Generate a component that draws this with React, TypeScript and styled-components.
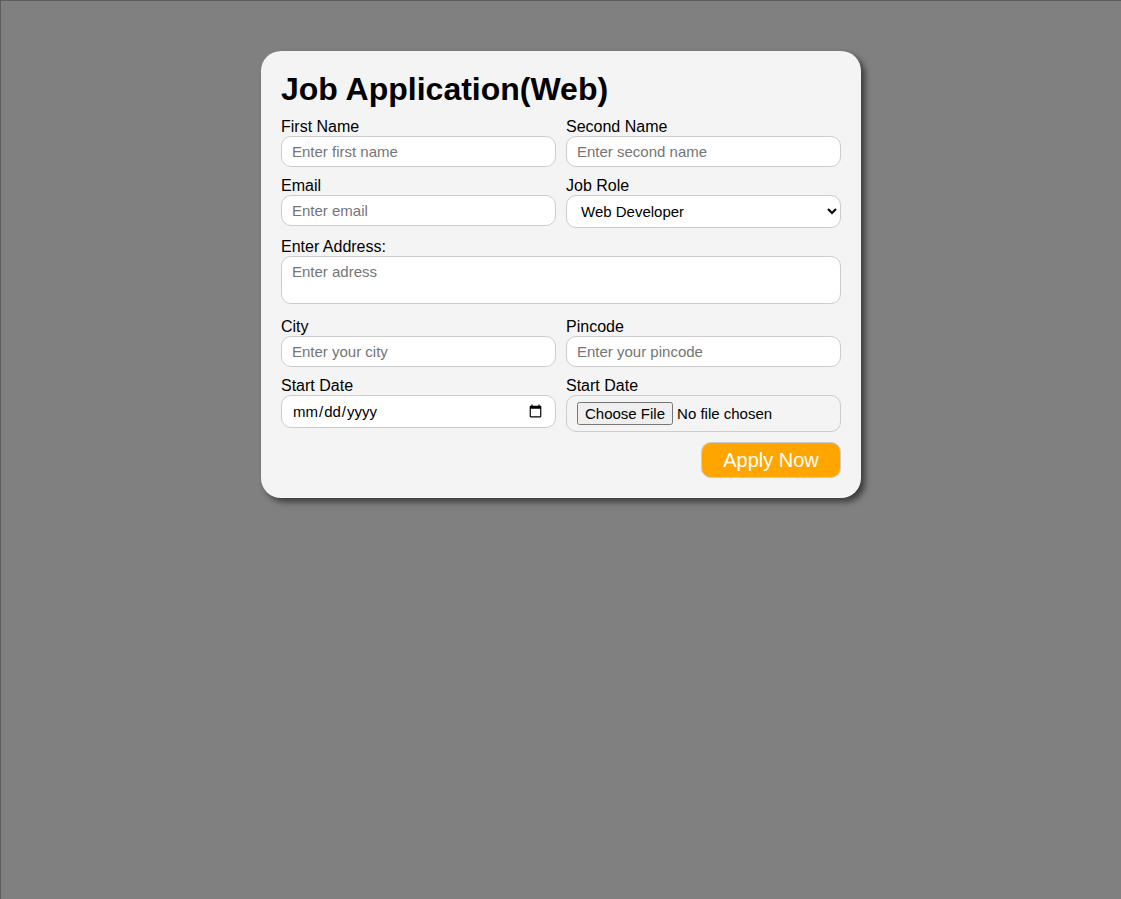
import React from 'react';
import styled, { createGlobalStyle } from 'styled-components';

const GlobalStyle = createGlobalStyle`
  html, body {
    margin: 0;
    padding: 0;
    background-color: #808080;
    font-family: "Liberation Sans", Arial, sans-serif;
  }
  * {
    box-sizing: border-box;
  }
`;

const Page = styled.div`
  min-height: 100vh;
  border-top: 1px solid #5c5c5c;
  border-left: 1px solid #5c5c5c;
  padding-top: 50px;
  display: flex;
  justify-content: center;
  align-items: flex-start;
`;

const Card = styled.form`
  width: 600px;
  padding: 20px;
  border-radius: 20px;
  background-color: #f4f4f4;
  box-shadow: 4px 4px 6px rgba(0, 0, 0, 0.55);
  color: #000;
`;

const Title = styled.h1`
  margin: 0 0 10px;
  font-size: 32px;
  line-height: 37px;
  font-weight: 700;
`;

const Grid = styled.div`
  display: grid;
  grid-template-columns: repeat(2, minmax(0, 1fr));
  column-gap: 10px;
  row-gap: 10px;
`;

const Field = styled.div<{ $wide?: boolean }>`
  display: flex;
  flex-direction: column;
  min-width: 0;
  grid-column: ${(p) => (p.$wide ? '1 / span 2' : 'auto')};
  margin-bottom: ${(p) => (p.$wide ? '4px' : '0')};
`;

const Label = styled.label`
  font-size: 16px;
  line-height: 18px;
`;

const fieldBase = `
  width: 100%;
  min-width: 0;
  border: 1px solid #cccccc;
  border-radius: 10px;
  background-color: #fff;
  font-family: "Liberation Sans", Arial, sans-serif;
  font-size: 15px;
  color: #000;
  outline: none;
  &::placeholder {
    color: #757575;
  }
`;

const Input = styled.input`
  ${fieldBase}
  height: 31px;
  padding: 0 10px;
`;

const DateInput = styled.input`
  ${fieldBase}
  height: 33px;
  padding: 0 10px;
`;

const Select = styled.select`
  ${fieldBase}
  height: 33px;
  padding: 0 6px 0 10px;
`;

const TextArea = styled.textarea`
  ${fieldBase}
  display: block;
  height: 48px;
  padding: 6px 10px;
  resize: none;
`;

const FileBox = styled.div`
  ${fieldBase}
  display: flex;
  align-items: center;
  height: 37px;
  padding: 0 10px;
  background-color: #f4f4f4;
`;

const FileInput = styled.input`
  font-family: "Liberation Sans", Arial, sans-serif;
  font-size: 15px;
  color: #000;
`;

const Actions = styled.div`
  display: flex;
  justify-content: flex-end;
  margin-top: 10px;
`;

const ApplyButton = styled.button`
  width: 140px;
  height: 36px;
  border: 1px solid #cccccc;
  border-radius: 10px;
  background-color: #ffa500;
  color: #fff;
  font-family: "Liberation Sans", Arial, sans-serif;
  font-size: 20px;
  cursor: pointer;
`;

export default function App() {
  return (
    <>
      <GlobalStyle />
      <Page>
        <Card onSubmit={(e) => e.preventDefault()}>
          <Title>Job Application(Web)</Title>
          <Grid>
            <Field>
              <Label>First Name</Label>
              <Input placeholder="Enter first name" />
            </Field>
            <Field>
              <Label>Second Name</Label>
              <Input placeholder="Enter second name" />
            </Field>
            <Field>
              <Label>Email</Label>
              <Input type="email" placeholder="Enter email" />
            </Field>
            <Field>
              <Label>Job Role</Label>
              <Select defaultValue="web">
                <option value="web">Web Developer</option>
                <option value="front">Frontend Developer</option>
                <option value="back">Backend Developer</option>
              </Select>
            </Field>
            <Field $wide>
              <Label>Enter Address:</Label>
              <TextArea placeholder="Enter adress" />
            </Field>
            <Field>
              <Label>City</Label>
              <Input placeholder="Enter your city" />
            </Field>
            <Field>
              <Label>Pincode</Label>
              <Input placeholder="Enter your pincode" />
            </Field>
            <Field>
              <Label>Start Date</Label>
              <DateInput type="date" />
            </Field>
            <Field>
              <Label>Start Date</Label>
              <FileBox>
                <FileInput type="file" />
              </FileBox>
            </Field>
          </Grid>
          <Actions>
            <ApplyButton type="submit">Apply Now</ApplyButton>
          </Actions>
        </Card>
      </Page>
    </>
  );
}
